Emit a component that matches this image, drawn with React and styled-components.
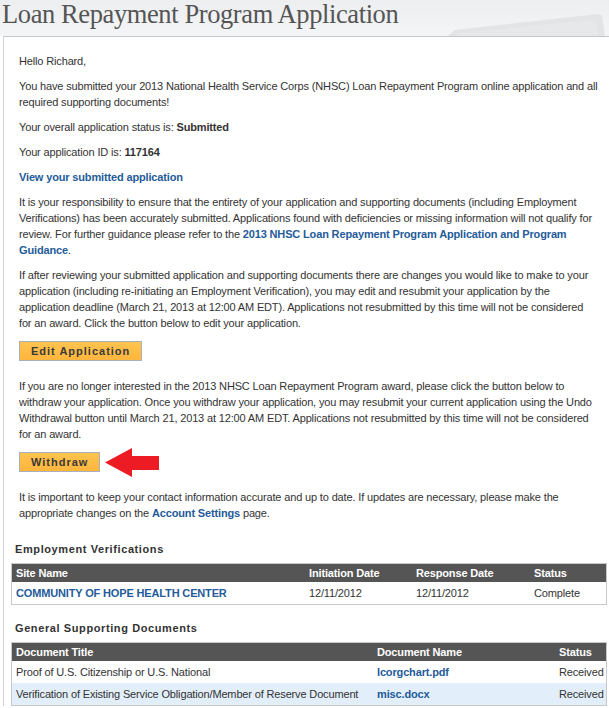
import React from "react";
import styled, { createGlobalStyle } from "styled-components";

const GlobalStyle = createGlobalStyle`
  html, body {
    margin: 0;
    padding: 0;
    background: #ffffff;
    overflow: hidden;
  }
  body {
    font-family: "Liberation Sans", Arial, sans-serif;
    font-size: 11px;
    letter-spacing: -0.15px;
    color: #333333;
  }
`;

const Page = styled.div`
  width: 609px;
`;

const Header = styled.header`
  height: 36px;
  display: flex;
  justify-content: space-between;
  align-items: flex-start;
  padding-left: 2px;
  background: linear-gradient(to bottom, #eceeef, #f4f5f6);
`;

const Title = styled.h1`
  margin: 0;
  font-family: "Liberation Serif", "DejaVu Serif", serif;
  font-weight: normal;
  font-size: 26.5px;
  letter-spacing: -0.4px;
  line-height: 28px;
  color: #555555;
  white-space: nowrap;
`;

const Paper = styled.svg`
  align-self: flex-end;
  margin-right: 2px;
  display: block;
`;

const Panel = styled.main`
  margin-left: 3px;
  border-top: 1px solid #c4c6c9;
  border-left: 1px solid #cfd4da;
  background: #ffffff;
  padding: 16px 2px 0 7px;
`;

const Intro = styled.section`
  padding: 0 8px 0 8px;
`;

const Para = styled.p`
  margin: 0 0 9px;
  line-height: 16px;
`;

const Strong = styled.b`
  font-weight: bold;
  color: #333333;
`;

const Link = styled.a`
  font-weight: bold;
  color: #245b9a;
  text-decoration: none;
`;

const ButtonRow = styled.div`
  display: flex;
  align-items: center;
  gap: 5px;
  margin: 10px 0 17px;
`;

const ActionButton = styled.button`
  height: 20px;
  padding: 0 11px;
  border: 1px solid #a7b1bd;
  background: linear-gradient(to bottom, #ffc44f, #ffb53d);
  font-family: "Liberation Sans", Arial, sans-serif;
  font-weight: bold;
  font-size: 11px;
  letter-spacing: 1px;
  color: #3a3a3a;
  line-height: 18px;
  cursor: pointer;
`;

const ArrowIcon = styled.svg`
  display: block;
  margin: -4.5px 0;
`;

const SectionTitle = styled.h2`
  margin: ${(p) => p.$top}px 0 6px 4px;
  font-size: 11px;
  line-height: 16px;
  font-weight: bold;
  letter-spacing: 0.6px;
  color: #333333;
`;

const Table = styled.div`
  border: 1px solid #c8c8c8;
`;

const Row = styled.div`
  display: grid;
  grid-template-columns: ${(p) => p.$cols};
  background: ${(p) => (p.$alt ? "#e2eef9" : "#ffffff")};
`;

const HeadRow = styled(Row)`
  background: #555555;
  color: #ffffff;
  font-weight: bold;
`;

const Cell = styled.div`
  padding: ${(p) => (p.$head ? "2px 4px" : "4px 4px")};
  line-height: 14px;
  white-space: nowrap;
`;

const TableLink = styled.a`
  font-weight: bold;
  color: #245b9a;
  text-decoration: none;
`;

const Arrow = () => (
  <ArrowIcon width="54" height="29" viewBox="0 0 54 29">
    <polygon
      points="0,14.5 27,0 27,8 54,8 54,22 27,22 27,29"
      fill="#ed1c24"
    />
  </ArrowIcon>
);

const EV_COLS = "293px 107px 118px 1fr";
const DOC_COLS = "361px 182px 1fr";

export default function App() {
  return (
    <Page>
      <GlobalStyle />
      <Header>
        <Title>Loan Repayment Program Application</Title>
        <Paper width="162" height="24" viewBox="0 0 162 24">
          <polygon points="3,24 10,18 153,2 157,3 160,24" fill="#e3e4e6" />
          <polygon points="10,24 14,21 150,8 154,24" fill="#e7e8ea" />
        </Paper>
      </Header>
      <Panel>
        <Intro>
          <Para>Hello Richard,</Para>
          <Para>
            You have submitted your 2013 National Health Service Corps (NHSC)
            Loan Repayment Program online application and all required
            supporting documents!
          </Para>
          <Para>
            Your overall application status is: <Strong>Submitted</Strong>
          </Para>
          <Para>
            Your application ID is: <Strong>117164</Strong>
          </Para>
          <Para>
            <Link href="#">View your submitted application</Link>
          </Para>
          <Para>
            It is your responsibility to ensure that the entirety of your
            application and supporting documents (including Employment
            Verifications) has been accurately submitted. Applications found
            with deficiencies or missing information will not qualify for
            review. For further guidance please refer to the{" "}
            <Link href="#">
              2013 NHSC Loan Repayment Program Application and Program Guidance
            </Link>
            .
          </Para>
          <Para>
            If after reviewing your submitted application and supporting
            documents there are changes you would like to make to your
            application (including re-initiating an Employment Verification),
            you may edit and resubmit your application by the
            application{"\u00A0"}deadline (March 21, 2013 at 12:00 AM EDT).
            Applications not resubmitted by this time will not be considered
            for{"\u00A0"}an award. Click the button below to edit your
            application.
          </Para>
          <ButtonRow>
            <ActionButton type="button">Edit Application</ActionButton>
          </ButtonRow>
          <Para>
            If you are no longer interested in the 2013 NHSC Loan Repayment
            Program award, please click the button below to withdraw your
            application. Once you withdraw your application, you may resubmit
            your current application using the Undo Withdrawal button until
            March 21, 2013 at 12:00 AM EDT. Applications not resubmitted by
            this time will not be considered for{"\u00A0"}an award.
          </Para>
          <ButtonRow>
            <ActionButton type="button">Withdraw</ActionButton>
            <Arrow />
          </ButtonRow>
          <Para>
            It is important to keep your contact information accurate and up
            to date. If updates are necessary, please make the appropriate
            changes on the <Link href="#">Account Settings</Link> page.
          </Para>
        </Intro>

        <SectionTitle $top={20}>Employment Verifications</SectionTitle>
        <Table>
          <HeadRow $cols={EV_COLS}>
            <Cell $head>Site Name</Cell>
            <Cell $head>Initiation Date</Cell>
            <Cell $head>Response Date</Cell>
            <Cell $head>Status</Cell>
          </HeadRow>
          <Row $cols={EV_COLS}>
            <Cell>
              <TableLink href="#">COMMUNITY OF HOPE HEALTH CENTER</TableLink>
            </Cell>
            <Cell>12/11/2012</Cell>
            <Cell>12/11/2012</Cell>
            <Cell>Complete</Cell>
          </Row>
        </Table>

        <SectionTitle $top={15}>General Supporting Documents</SectionTitle>
        <Table>
          <HeadRow $cols={DOC_COLS}>
            <Cell $head>Document Title</Cell>
            <Cell $head>Document Name</Cell>
            <Cell $head>Status</Cell>
          </HeadRow>
          <Row $cols={DOC_COLS}>
            <Cell>Proof of U.S. Citizenship or U.S. National</Cell>
            <Cell>
              <TableLink href="#">lcorgchart.pdf</TableLink>
            </Cell>
            <Cell>Received</Cell>
          </Row>
          <Row $cols={DOC_COLS} $alt>
            <Cell>
              Verification of Existing Service Obligation/Member of Reserve
              Document
            </Cell>
            <Cell>
              <TableLink href="#">misc.docx</TableLink>
            </Cell>
            <Cell>Received</Cell>
          </Row>
        </Table>
      </Panel>
    </Page>
  );
}
